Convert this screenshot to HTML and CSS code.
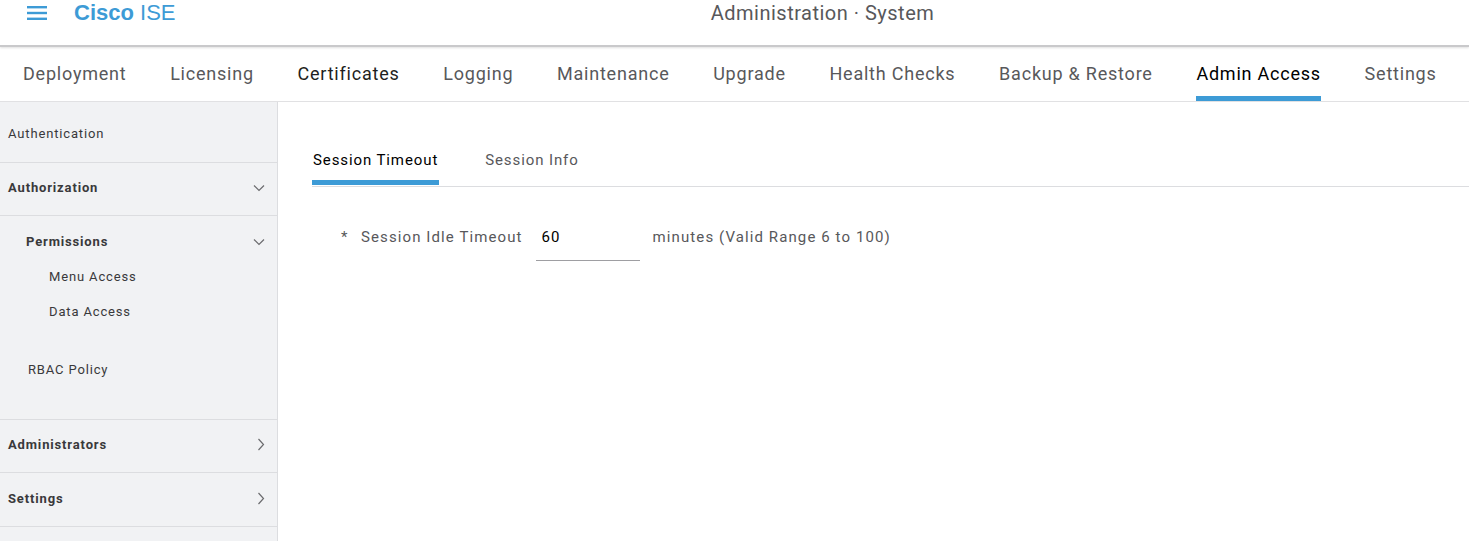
FILE: index.html
```html
<!DOCTYPE html>
<html>
<head>
<meta charset="utf-8">
<link rel="stylesheet" href="styles.css">
</head>
<body>
<header class="topbar">
  <div class="brand">
    <svg class="menu-icon" width="20" height="14" viewBox="0 0 20 14"><rect x="0" y="0" width="20" height="2.4" fill="#3d9bd6"/><rect x="0" y="5.8" width="20" height="2.4" fill="#3d9bd6"/><rect x="0" y="11.6" width="20" height="2.4" fill="#3d9bd6"/></svg>
    <span class="logo"><b>Cisco</b> ISE</span>
  </div>
  <div class="title">Administration · System</div>
</header>
<nav class="tabs">
  <a>Deployment</a>
  <a>Licensing</a>
  <a class="dark">Certificates</a>
  <a>Logging</a>
  <a>Maintenance</a>
  <a>Upgrade</a>
  <a>Health Checks</a>
  <a>Backup &amp; Restore</a>
  <a class="active">Admin Access</a>
  <a>Settings</a>
</nav>
<div class="main">
  <aside class="side">
    <div class="sec sec-auth">Authentication</div>
    <div class="sec sec-head"><b>Authorization</b><svg class="chev" width="12" height="8" viewBox="0 0 12 8"><path d="M1 1.5 L6 6.5 L11 1.5" fill="none" stroke="#6b6b6e" stroke-width="1.2"/></svg></div>
    <div class="sec sec-group">
      <div class="sub-head"><b>Permissions</b><svg class="chev" width="12" height="8" viewBox="0 0 12 8"><path d="M1 1.5 L6 6.5 L11 1.5" fill="none" stroke="#6b6b6e" stroke-width="1.2"/></svg></div>
      <div class="leaf">Menu Access</div>
      <div class="leaf">Data Access</div>
      <div class="rbac">RBAC Policy</div>
    </div>
    <div class="sec sec-head"><b>Administrators</b><svg class="chev" width="8" height="13" viewBox="0 0 8 13"><path d="M1.5 1 L6.5 6.5 L1.5 12" fill="none" stroke="#6b6b6e" stroke-width="1.2"/></svg></div>
    <div class="sec sec-head sec-last"><b>Settings</b><svg class="chev" width="8" height="13" viewBox="0 0 8 13"><path d="M1.5 1 L6.5 6.5 L1.5 12" fill="none" stroke="#6b6b6e" stroke-width="1.2"/></svg></div>
  </aside>
  <section class="content">
    <div class="subtabs">
      <a class="active">Session Timeout</a>
      <a>Session Info</a>
    </div>
    <div class="form-row">
      <span class="req">*</span>
      <label>Session Idle Timeout</label>
      <div class="input">60</div>
      <span class="hint">minutes (Valid Range 6 to 100)</span>
    </div>
  </section>
</div>
</body>
</html>
```
FILE: styles.css
```css
* { box-sizing: border-box; }
html, body { margin: 0; padding: 0; background: #fff; }
body {
  font-family: Roboto, "Liberation Sans", Arial, sans-serif;
  color: #39393b;
  width: 1469px;
  height: 541px;
  overflow: hidden;
}
.topbar {
  height: 47px;
  display: flex;
  align-items: flex-start;
  position: relative;
  border-bottom: 2px solid #c9c9cb;
  box-shadow: 0 1px 2px rgba(0,0,0,0.12);
}
.brand {
  display: flex;
  align-items: center;
  padding-left: 27px;
  height: 26px;
}
.menu-icon { display: block; margin-right: 27px; }
.logo {
  font-family: "Liberation Sans", Arial, sans-serif;
  font-size: 22px;
  color: #3d9bd6;
}
.logo b { font-weight: 700; }
.title {
  position: absolute;
  left: 0; right: 0;
  top: 0;
  text-align: center;
  font-size: 20px;
  letter-spacing: 0.5px;
  color: #58585b;
  line-height: 26px;
  padding-left: 176px;
}
.tabs {
  display: flex;
  gap: 43.7px;
  padding-left: 23px;
  height: 55px;
  border-bottom: 1px solid #e1e1e3;
}
.tabs a {
  font-size: 18px;
  letter-spacing: 0.78px;
  color: #58585b;
  line-height: 52px;
  border-bottom: 5px solid transparent;
  height: 54px;
  padding-top: 1px;
}
.tabs a.dark { color: #1f1f21; }
.tabs a.active { color: #000; border-bottom-color: #3d9bd6; }
.main {
  display: flex;
  height: 440px;
}
.side {
  width: 278px;
  background: #f1f2f4;
  border-right: 1px solid #dcdde0;
  font-size: 13px;
  letter-spacing: 0.85px;
  color: #39393b;
}
.sec {
  border-bottom: 1px solid #dcdde0;
  padding-left: 8px;
  padding-right: 12px;
}
.sec-auth { height: 61px; line-height: 62px; padding-top: 1px; }
.sec-head {
  height: 53px;
  display: flex;
  align-items: center;
  justify-content: space-between;
  padding-bottom: 3px;
}
.sec-last { height: 54px; }
.sec-head b, .sub-head b { font-weight: 700; color: #39393b; }
.sec-group { height: 204px; padding-top: 17px; }
.sub-head {
  display: flex;
  align-items: center;
  justify-content: space-between;
  padding-left: 18px;
  height: 17px;
}
.leaf { padding-left: 41px; margin-top: 18px; line-height: 18px; }
.leaf + .leaf { margin-top: 17px; }
.rbac { padding-left: 20px; margin-top: 40px; line-height: 18px; }
.content {
  flex: 1;
  padding-top: 48px;
  padding-left: 34px;
}
.subtabs {
  display: flex;
  gap: 45px;
  border-bottom: 1px solid #dcdde0;
  height: 37px;
}
.subtabs a {
  font-size: 15px;
  letter-spacing: 0.9px;
  color: #58585b;
  padding: 0 1px 0 1px;
  height: 35px;
  border-bottom: 5px solid transparent;
  line-height: 20px;
}
.subtabs a.active { color: #000; border-bottom-color: #3d9bd6; }
.form-row {
  display: flex;
  align-items: flex-start;
  margin-top: 40px;
  padding-left: 29px;
  font-size: 15px;
  letter-spacing: 1.1px;
  color: #58585b;
  line-height: 20px;
}
.req { width: 20px; }
.form-row label { margin-right: 13px; }
.input {
  width: 104px;
  height: 34px;
  border-bottom: 1px solid #9e9ea2;
  padding-left: 6px;
  color: #000;
  margin-right: 13px;
}
.hint { color: #58585b; }
```
